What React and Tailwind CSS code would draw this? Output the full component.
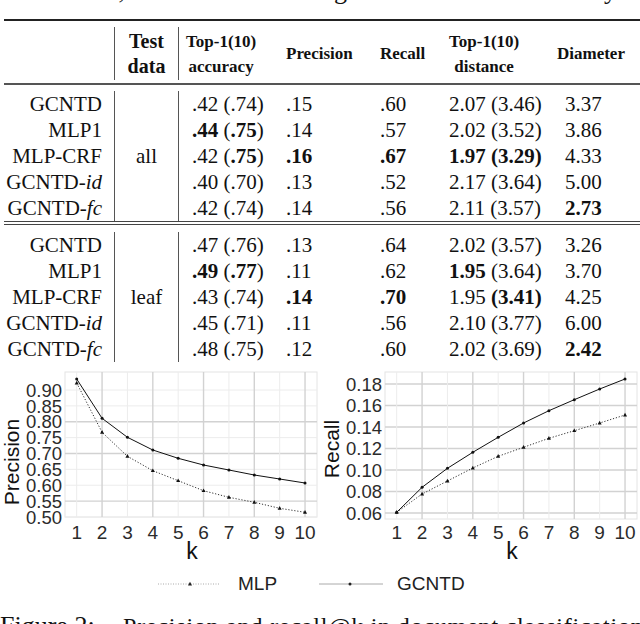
import React from "react";

const B = ({ children }) => <span className="font-bold">{children}</span>;

// rows for the "all" block
const allRows = [
  { name: "GCNTD", acc: ".42 (.74)", p: ".15", r: ".60", d: "2.07 (3.46)", dia: "3.37" },
  { name: "MLP1", acc: <><B>.44</B> (<B>.75</B>)</>, p: ".14", r: ".57", d: "2.02 (3.52)", dia: "3.86" },
  { name: "MLP-CRF", acc: <>.42 (<B>.75</B>)</>, p: <B>.16</B>, r: <B>.67</B>, d: <B>1.97 (3.29)</B>, dia: "4.33" },
  { name: <>GCNTD-<i>id</i></>, acc: ".40 (.70)", p: ".13", r: ".52", d: "2.17 (3.64)", dia: "5.00" },
  { name: <>GCNTD-<i>fc</i></>, acc: ".42 (.74)", p: ".14", r: ".56", d: "2.11 (3.57)", dia: <B>2.73</B> },
];

// rows for the "leaf" block
const leafRows = [
  { name: "GCNTD", acc: ".47 (.76)", p: ".13", r: ".64", d: "2.02 (3.57)", dia: "3.26" },
  { name: "MLP1", acc: <><B>.49</B> (<B>.77</B>)</>, p: ".11", r: ".62", d: <><B>1.95</B> (3.64)</>, dia: "3.70" },
  { name: "MLP-CRF", acc: ".43 (.74)", p: <B>.14</B>, r: <B>.70</B>, d: <>1.95 <B>(3.41)</B></>, dia: "4.25" },
  { name: <>GCNTD-<i>id</i></>, acc: ".45 (.71)", p: ".11", r: ".56", d: "2.10 (3.77)", dia: "6.00" },
  { name: <>GCNTD-<i>fc</i></>, acc: ".48 (.75)", p: ".12", r: ".60", d: "2.02 (3.69)", dia: <B>2.42</B> },
];

function Section({ rows, label }) {
  const col = (key, cls) => (
    <div className={cls}>
      {rows.map((r, i) => (
        <div key={i} className="h-[26px] leading-[26px] whitespace-nowrap">
          {r[key]}
        </div>
      ))}
    </div>
  );
  return (
    <div className="flex text-[21px] text-[#111] [font-family:'Liberation_Serif','Times_New_Roman',serif]">
      {col("name", "w-[115px] pr-[12px] text-right border-r-[1.5px] border-[#555]")}
      <div className="w-[64px] border-r-[1.5px] border-[#555]">
        {rows.map((r, i) => (
          <div key={i} className="h-[26px] leading-[26px] text-center">
            {i === 2 ? label : ""}
          </div>
        ))}
      </div>
      {col("acc", "w-[107px] pl-[13px]")}
      {col("p", "w-[94px]")}
      {col("r", "w-[69px]")}
      {col("d", "w-[116px]")}
      {col("dia", "w-[75px]")}
    </div>
  );
}

const K = [1, 2, 3, 4, 5, 6, 7, 8, 9, 10];
const kx = (k) => 76.7 + (k - 1) * 25.37;

const tri = (x, y) => `${x},${y - 2.2} ${x - 2},${y + 1.4} ${x + 2},${y + 1.4}`;

function Chart({ label, labelY, ticks, hLines, gcntd, mlp, bottom }) {
  const pts = (ys) => ys.map((y, i) => `${kx(i + 1)},${y}`).join(" ");
  return (
    <svg width="320" height="190" className="block shrink-0 [font-family:'Liberation_Sans',Arial,sans-serif]">
      <rect x="65" y="3" width="252" height={bottom - 3} fill="#fff" stroke="#e4e4e4" strokeWidth="1" />
      {hLines.map((h, i) => (
        <line key={i} x1="65" x2="317" y1={h.y} y2={h.y} stroke={h.major ? "#d2d2d2" : "#ececec"} strokeWidth={h.major ? 1.4 : 1} />
      ))}
      {K.map((k) => (
        <line key={k} x1={kx(k)} x2={kx(k)} y1="3" y2={bottom} stroke={k % 2 === 0 ? "#d2d2d2" : "#ececec"} strokeWidth={k % 2 === 0 ? 1.4 : 1} />
      ))}
      <polyline points={pts(mlp)} fill="none" stroke="#333" strokeWidth="1" strokeDasharray="1.2 1.8" />
      <polyline points={pts(gcntd)} fill="none" stroke="#111" strokeWidth="1" />
      {mlp.map((y, i) => (
        <polygon key={i} points={tri(kx(i + 1), y)} fill="#111" />
      ))}
      {gcntd.map((y, i) => (
        <circle key={i} cx={kx(i + 1)} cy={y} r="1.5" fill="#111" />
      ))}
      {ticks.map((t, i) => (
        <text key={i} x="62" y={t.y} dy="0.36em" textAnchor="end" fontSize="18.5" fill="#2b2b2b">
          {t.v}
        </text>
      ))}
      {K.map((k) => (
        <text key={k} x={kx(k)} y="163" dy="0.36em" textAnchor="middle" fontSize="19" fill="#2b2b2b">
          {k}
        </text>
      ))}
      <text x="192" y="182" dy="0.36em" textAnchor="middle" fontSize="23" fill="#111">
        k
      </text>
      <text x="0" y="0" transform={`translate(11 ${labelY}) rotate(-90)`} dy="0.36em" textAnchor="middle" fontSize="21" fill="#111">
        {label}
      </text>
    </svg>
  );
}

const precTicks = ["0.90", "0.85", "0.80", "0.75", "0.70", "0.65", "0.60", "0.55", "0.50"].map((v, i) => ({ v, y: 21 + i * 15.87 }));
const precLines = precTicks.map((t) => ({ y: t.y, major: ["0.80", "0.70", "0.55"].includes(t.v) }));
const recTicks = ["0.18", "0.16", "0.14", "0.12", "0.10", "0.08", "0.06"].map((v, i) => ({ v, y: 15 + i * 21.5 }));
const recLines = recTicks.map((t) => ({ y: t.y, major: true }));

export default function App() {
  return (
    <div className="w-[640px] h-[624px] overflow-hidden bg-white text-[#111] [font-family:'Liberation_Serif','Times_New_Roman',serif]">
      {/* cut-off caption line above the table */}
      <div className="h-[19px] overflow-hidden">
        <div className="flex -mt-[22px] text-[26px] leading-[26px] whitespace-nowrap">
          <div className="w-[125px] shrink-0 flex justify-end">
            <span>each level,</span>
          </div>
          <div className="w-[222px] shrink-0 flex justify-end">
            <span>the best for leading</span>
          </div>
          <div className="w-[270px] shrink-0 flex justify-end">
            <span>node in tree is bold by</span>
          </div>
        </div>
      </div>

      <div className="ml-[4px] h-[2px] bg-[#222]" />

      {/* header */}
      <div className="pt-[6px] pb-[3px]">
        <div className="flex h-[53px] font-bold">
          <div className="w-[115px] border-r-[1.5px] border-[#555]" />
          <div className="w-[64px] border-r-[1.5px] border-[#555] flex flex-col items-center justify-center text-[20px] leading-[25px]">
            <span>Test</span>
            <span>data</span>
          </div>
          <div className="w-[107px] pl-[7px] flex items-center">
            <div className="flex flex-col items-center text-[17px] leading-[25px]">
              <span>Top-1(10)</span>
              <span>accuracy</span>
            </div>
          </div>
          <div className="w-[94px] flex items-center text-[17px]">Precision</div>
          <div className="w-[69px] flex items-center text-[17px]">Recall</div>
          <div className="w-[116px] flex items-center">
            <div className="flex flex-col items-center text-[17px] leading-[25px]">
              <span>Top-1(10)</span>
              <span>distance</span>
            </div>
          </div>
          <div className="w-[83px] -ml-[8px] flex items-center text-[17px]">Diameter</div>
        </div>
      </div>

      <div className="ml-[4px] h-[2px] bg-[#555]" />

      <div className="mt-[6px]">
        <Section rows={allRows} label="all" />
      </div>

      <div className="ml-[4px] h-px bg-[#444]" />
      <div className="ml-[4px] mt-[2px] h-px bg-[#444]" />

      <div className="mt-[7px]">
        <Section rows={leafRows} label="leaf" />
      </div>

      {/* charts */}
      <div className="flex mt-[7px]">
        <Chart
          label="Precision"
          labelY={93}
          ticks={precTicks}
          hLines={precLines}
          bottom={148}
          gcntd={[10, 49.3, 68.3, 81, 89.3, 96, 101, 106, 110, 114]}
          mlp={[14, 63.3, 87.3, 101.7, 111.7, 121.7, 128.3, 133.3, 139.3, 143.3]}
        />
        <Chart
          label="Recall"
          labelY={80}
          ticks={recTicks}
          hLines={recLines}
          bottom={150}
          gcntd={[143.3, 118.3, 99.3, 83.3, 68.3, 54, 41.7, 30.7, 20, 10]}
          mlp={[143.3, 125, 112, 99, 87.3, 78.3, 69.3, 61.7, 54, 46]}
        />
      </div>

      {/* legend */}
      <div className="flex items-center h-[20px] mt-[15px] [font-family:'Liberation_Sans',Arial,sans-serif] text-[19px] text-[#222]">
        <svg width="62" height="10" className="ml-[158px] shrink-0">
          <line x1="0" x2="62" y1="5" y2="5" stroke="#aaa" strokeWidth="1" strokeDasharray="1 1.5" />
          <polygon points={tri(32, 5)} fill="#222" />
        </svg>
        <span className="ml-[18px]">MLP</span>
        <svg width="64" height="10" className="ml-[42px] shrink-0">
          <line x1="0" x2="64" y1="5" y2="5" stroke="#aaa" strokeWidth="1" />
          <circle cx="31" cy="5" r="1.5" fill="#222" />
        </svg>
        <span className="ml-[14px]">GCNTD</span>
      </div>

      {/* figure caption, cut at the bottom */}
      <div className="flex items-baseline mt-[19px] whitespace-nowrap leading-[26px]">
        <span className="text-[26px] w-[123px] shrink-0">Figure 2:</span>
        <span className="text-[24px] tracking-[0.8px]">Precision and recall@k in document classification</span>
      </div>
    </div>
  );
}
